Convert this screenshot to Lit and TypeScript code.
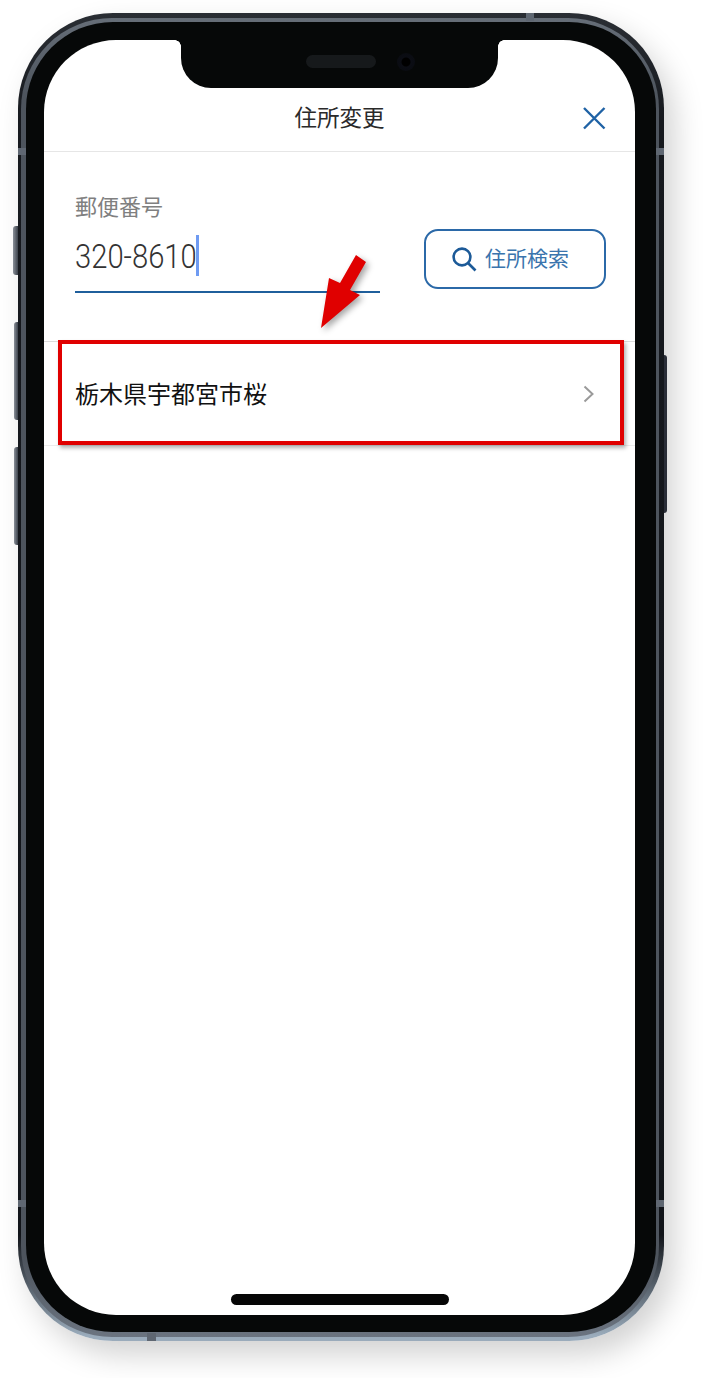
import { LitElement, html, css } from "lit";
import { customElement } from "lit/decorators.js";

@customElement("app-root")
export class AppRoot extends LitElement {
  static styles = css`
    :host {
      display: block;
      position: relative;
      width: 705px;
      height: 1378px;
      overflow: hidden;
      background: #fff;
      font-family: "Noto Sans CJK JP", "Noto Sans", sans-serif;
    }
    .phone {
      position: relative;
      box-sizing: border-box;
      width: 646px;
      margin: 13px 0 0 18px;
      padding: 5px 5px 4px 3px;
      border-radius: 95px;
      background: linear-gradient(180deg, #2a2e34 0%, #16191e 8%, #111419 92%, #9aabbb 99.6%);
      box-shadow: 10px 14px 30px rgba(0, 0, 0, 0.18);
    }
    .band {
      padding: 4px 3px 5px 5px;
      border-radius: 91px;
      background: linear-gradient(180deg, #666e78 0%, #4d545d 6%, #4d545d 94%, #6b7480 100%);
    }
    .body {
      padding: 18px 21px 17px 18px;
      border-radius: 87px;
      background: #060808;
    }
    .screen {
      position: relative;
      display: flex;
      flex-direction: column;
      height: 1275px;
      border-radius: 72px;
      background: #fff;
      overflow: hidden;
    }
    .notch {
      position: absolute;
      top: 0;
      left: 137px;
      width: 317px;
      height: 48px;
      border-radius: 0 0 30px 30px;
      background: #060808;
    }
    .notch::before,
    .notch::after {
      content: "";
      position: absolute;
      top: 0;
      width: 6px;
      height: 6px;
    }
    .notch::before {
      left: -6px;
      background: radial-gradient(circle at 0 100%, transparent 5.5px, #060808 6px);
    }
    .notch::after {
      right: -6px;
      background: radial-gradient(circle at 100% 100%, transparent 5.5px, #060808 6px);
    }
    .speaker {
      position: absolute;
      left: 125px;
      top: 15px;
      width: 70px;
      height: 13px;
      border-radius: 7px;
      background: #16191b;
    }
    .camera {
      position: absolute;
      left: 216px;
      top: 13px;
      width: 18px;
      height: 18px;
      border-radius: 50%;
      background: radial-gradient(circle, #000 0 4px, #0b0d14 5px, #0a0c12 9px);
    }
    .header {
      display: grid;
      grid-template-columns: 1fr auto 1fr;
      align-items: center;
      box-sizing: border-box;
      height: 112px;
      padding: 54px 29px 13px 29px;
      border-bottom: 1px solid #e6e6e6;
    }
    .title {
      grid-column: 2;
      font-size: 22.5px;
      line-height: 44px;
      color: #2a2a2a;
    }
    .close {
      grid-column: 3;
      justify-self: end;
      display: block;
      width: 24px;
      height: 24px;
      position: relative;
      top: 2px;
    }
    .form {
      display: flex;
      align-items: flex-end;
      justify-content: space-between;
      padding: 38px 29px 48px 31px;
    }
    .field {
      width: 305px;
      border-bottom: 2px solid #1f5f9c;
    }
    .label {
      font-size: 22px;
      line-height: 30px;
      color: #808080;
    }
    .value {
      display: flex;
      align-items: center;
      height: 50px;
      padding: 10px 0 11px;
    }
    .digits {
      display: inline-block;
      width: 121px;
      font-family: Roboto, sans-serif;
      font-weight: 300;
      font-size: 33px;
      line-height: 50px;
      color: #333;
      white-space: nowrap;
      transform: translateY(2px) scaleX(0.885);
      transform-origin: left center;
    }
    .caret {
      width: 2.5px;
      height: 41px;
      background: #6f9bf2;
    }
    .search {
      display: flex;
      align-items: center;
      justify-content: center;
      gap: 8px;
      box-sizing: border-box;
      width: 182px;
      height: 60px;
      margin-bottom: 4px;
      padding: 0 10px 4px 0;
      border: 2px solid #2b69a8;
      border-radius: 14px;
      font-size: 21px;
      color: #3a74ad;
    }
    .search svg {
      display: block;
      width: 26px;
      height: 26px;
      position: relative;
      top: 2px;
    }
    .row {
      display: flex;
      align-items: center;
      justify-content: space-between;
      height: 103px;
      padding: 0 41px 0 31px;
      border-top: 1px solid #dcdcdc;
      border-bottom: 1px solid #ececec;
    }
    .address {
      font-size: 24px;
      color: #111;
      position: relative;
      top: -1px;
    }
    .chev {
      display: block;
      width: 11px;
      height: 18px;
    }
    .spacer {
      flex: 1;
    }
    .home {
      align-self: center;
      width: 218px;
      height: 11px;
      margin-bottom: 10px;
      border-radius: 6px;
      background: #060606;
    }
    .mark {
      position: absolute;
      background: #5f6772;
    }
    .key {
      position: absolute;
      background: linear-gradient(90deg, #8a9099, #3c424b);
    }
    .highlight {
      position: absolute;
      box-sizing: border-box;
      left: 58px;
      top: 340px;
      width: 566px;
      height: 105px;
      border: 4px solid #e00000;
      box-shadow: 2px 3px 4px rgba(0, 0, 0, 0.3);
    }
    .arrow {
      position: absolute;
      left: 300px;
      top: 240px;
      width: 90px;
      height: 100px;
      overflow: visible;
      filter: drop-shadow(3px 3px 3px rgba(0, 0, 0, 0.35));
    }
  `;

  render() {
    return html`
      <div class="phone">
        <div class="key" style="left:-5px;top:213px;width:5px;height:49px;border-radius:3px 0 0 3px"></div>
        <div class="key" style="left:-4px;top:309px;width:4px;height:98px;border-radius:3px 0 0 3px"></div>
        <div class="key" style="left:-4px;top:434px;width:4px;height:98px;border-radius:3px 0 0 3px"></div>
        <div class="key" style="right:-3px;top:342px;width:3px;height:158px;border-radius:0 3px 3px 0;background:#2a2e38"></div>
        <div class="mark" style="left:0;top:135px;width:8px;height:7px"></div>
        <div class="mark" style="right:0;top:135px;width:8px;height:7px"></div>
        <div class="mark" style="left:0;top:1187px;width:8px;height:7px"></div>
        <div class="mark" style="right:0;top:1187px;width:8px;height:7px"></div>
        <div class="mark" style="left:129px;bottom:0;width:9px;height:8px"></div>
        <div class="mark" style="left:508px;top:0;width:8px;height:8px"></div>
        <div class="band">
          <div class="body">
            <div class="screen">
              <div class="header">
                <div class="title">住所変更</div>
                <svg class="close" viewBox="0 0 24 24" fill="none" stroke="#1f62a5" stroke-width="2.4">
                  <path d="M2 2 L22.5 22.5 M22.5 2 L2 22.5" />
                </svg>
              </div>
              <div class="form">
                <div class="field">
                  <div class="label">郵便番号</div>
                  <div class="value"><span class="digits">320-8610</span><span class="caret"></span></div>
                </div>
                <div class="search">
                  <svg viewBox="0 0 26 26" fill="none" stroke="#1c5a98" stroke-width="2.6">
                    <circle cx="11" cy="11" r="8.4" />
                    <path d="M17 17 L24.5 24.5" />
                  </svg>
                  <span>住所検索</span>
                </div>
              </div>
              <div class="row">
                <span class="address">栃木県宇都宮市桜</span>
                <svg class="chev" viewBox="0 0 11 18" fill="none" stroke="#9a9a9a" stroke-width="2">
                  <path d="M1.5 1.5 L9.5 9 L1.5 16.5" />
                </svg>
              </div>
              <div class="spacer"></div>
              <div class="home"></div>
              <div class="notch">
                <div class="speaker"></div>
                <div class="camera"></div>
              </div>
            </div>
          </div>
        </div>
      </div>
      <div class="highlight"></div>
      <svg class="arrow" viewBox="300 240 90 100">
        <polygon fill="#e00000" points="356,255 366,262 350,290 360,295 321,328 329,278 340,283" />
      </svg>
    `;
  }
}
